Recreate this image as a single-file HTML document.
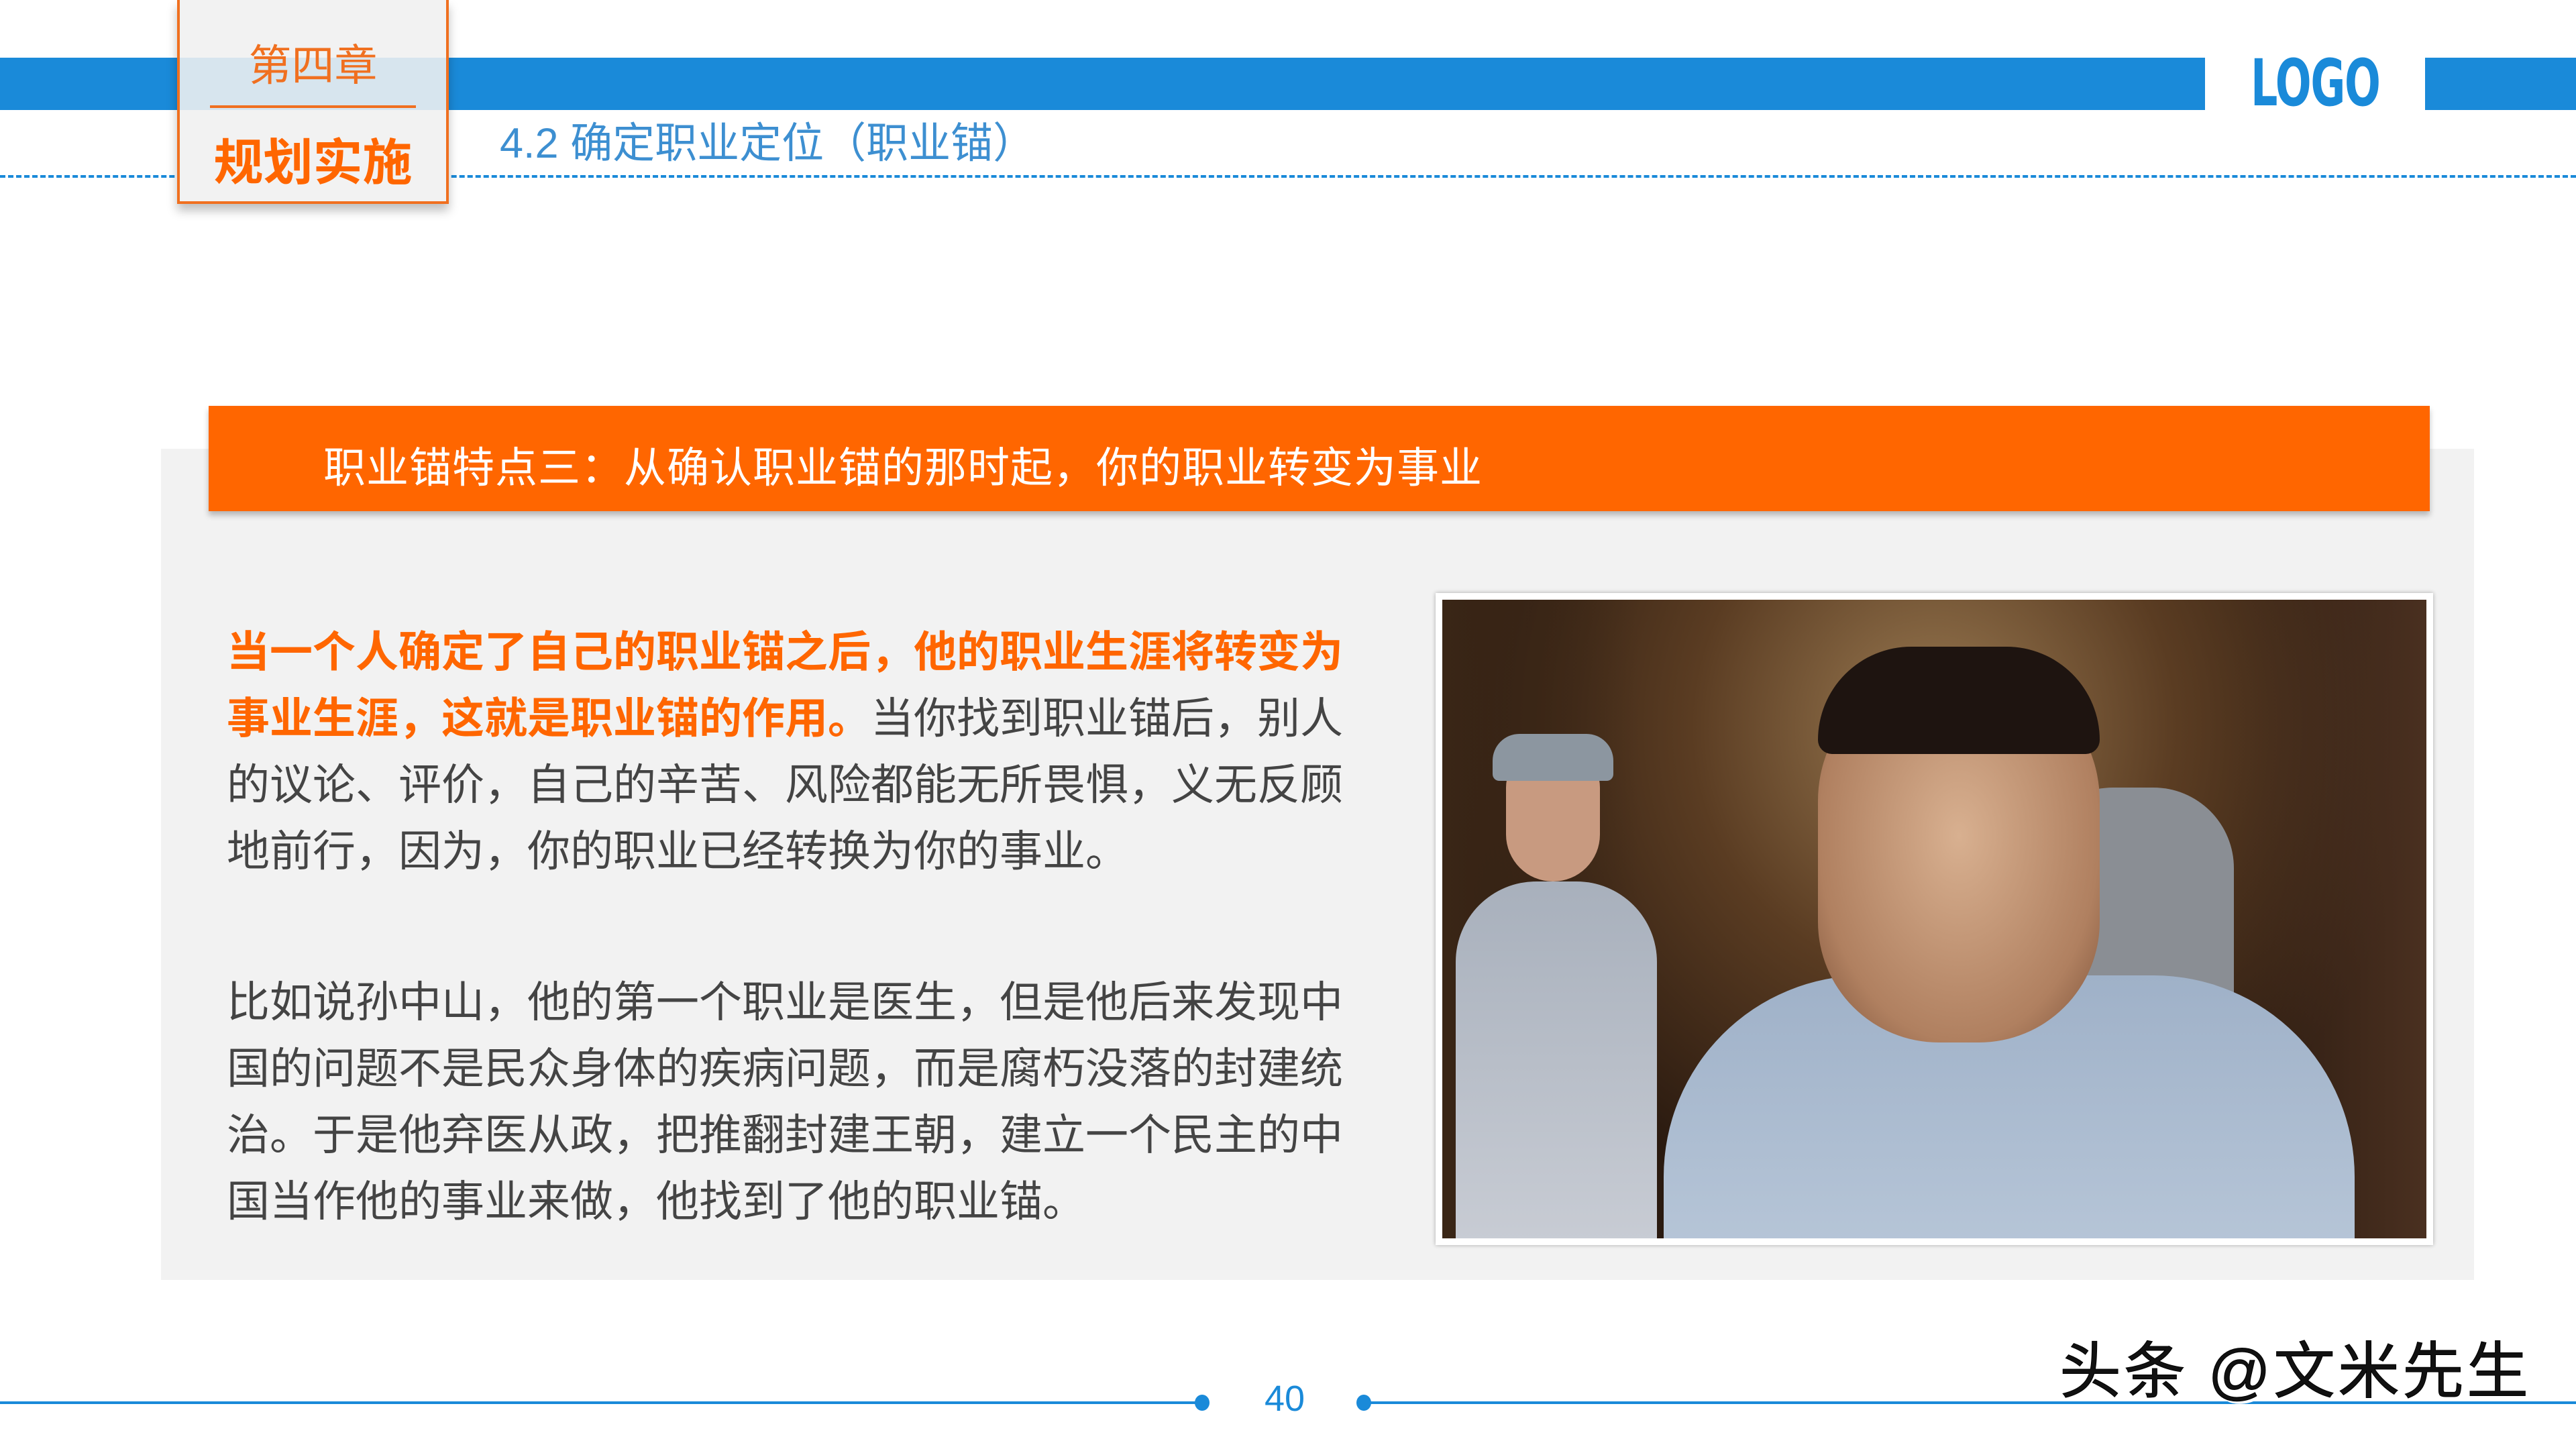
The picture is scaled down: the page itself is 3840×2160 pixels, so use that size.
<!DOCTYPE html>
<html><head><meta charset="utf-8"><style>
*{margin:0;padding:0;box-sizing:border-box}
body{width:3840px;height:2160px;position:relative;background:#fff;overflow:hidden;font-family:"Liberation Sans","Noto Sans CJK SC",sans-serif}
.a{position:absolute}
.t{font-size:64px;line-height:99px;color:#444;letter-spacing:0}
.o{color:#ff6600;font-weight:bold}
</style></head><body>
<div class="a" style="left:0;top:86px;width:3287px;height:78px;background:#1a8ad9"></div>
<div class="a" style="left:3615px;top:86px;width:225px;height:78px;background:#1a8ad9"></div>
<div class="a" style="left:3355px;top:74px;width:200px;height:100px;color:#1a8ad9;font-weight:bold;font-size:96px;line-height:100px;transform:scaleX(0.66);transform-origin:left;font-family:'DejaVu Sans','Liberation Sans',sans-serif;letter-spacing:-2px">LOGO</div>
<div class="a" style="left:0;top:261px;width:3840px;border-top:4px dashed #1a8ad9"></div>
<div class="a" style="left:264px;top:0;width:405px;height:304px;background:#f2f2f2;border:4px solid #f07020;border-top:none;box-shadow:0 10px 14px rgba(0,0,0,.25)"></div>
<div class="a" style="left:268px;top:86px;width:397px;height:78px;background:rgba(26,138,217,.12)"></div>
<div class="a" style="left:264px;top:60px;width:405px;text-align:center;color:#f07020;font-size:64px;line-height:76px">第四章</div>
<div class="a" style="left:313px;top:157px;width:307px;height:4px;background:#f07020"></div>
<div class="a" style="left:264px;top:198px;width:405px;text-align:center;color:#ff6600;font-weight:bold;font-size:74px;line-height:90px">规划实施</div>
<div class="a" style="left:745px;top:174px;color:#3d8fd1;font-size:63px;line-height:80px">4.2 确定职业定位（职业锚）</div>
<div class="a" style="left:240px;top:669px;width:3448px;height:1239px;background:#f2f2f2"></div>
<div class="a" style="left:311px;top:605px;width:3311px;height:157px;background:#ff6600;box-shadow:0 6px 8px rgba(0,0,0,.25)"></div>
<div class="a" style="left:482px;top:660px;color:#fff;font-size:63px;line-height:76px;letter-spacing:1px">职业锚特点三：从确认职业锚的那时起，你的职业转变为事业</div>
<div class="a t" style="left:338px;top:923px;width:1680px"><span class="o">当一个人确定了自己的职业锚之后，他的职业生涯将转变为事业生涯，这就是职业锚的作用。</span>当你找到职业锚后，别人的议论、评价，自己的辛苦、风险都能无所畏惧，义无反顾地前行，因为，你的职业已经转换为你的事业。</div>
<div class="a t" style="left:338px;top:1445px;width:1680px">比如说孙中山，他的第一个职业是医生，但是他后来发现中国的问题不是民众身体的疾病问题，而是腐朽没落的封建统治。于是他弃医从政，把推翻封建王朝，建立一个民主的中国当作他的事业来做，他找到了他的职业锚。</div>
<div class="a" style="left:2140px;top:884px;width:1487px;height:972px;background:#fff;box-shadow:0 0 6px rgba(0,0,0,.3)"></div>
<div class="a" style="left:2150px;top:894px;width:1467px;height:952px;overflow:hidden;background:radial-gradient(ellipse at 50% 20%,#9a7a52 0%,#5a3c22 35%,#2a1a10 70%)">
 <div class="a" style="left:0;top:0;width:1467px;height:952px;background:linear-gradient(90deg,#3a2616 0%,transparent 20%,transparent 80%,#4a3020 100%)"></div>
 <div class="a" style="left:20px;top:420px;width:300px;height:540px;background:linear-gradient(#a8b0bc,#c8ccd4);border-radius:120px 120px 0 0"></div>
 <div class="a" style="left:95px;top:220px;width:140px;height:200px;background:#c89a80;border-radius:60px 60px 70px 70px"></div>
 <div class="a" style="left:75px;top:200px;width:180px;height:70px;background:#8c96a0;border-radius:40px 40px 10px 10px"></div>
 <div class="a" style="left:880px;top:280px;width:300px;height:560px;background:#8a8e94;border-radius:120px 120px 0 0"></div>
 <div class="a" style="left:330px;top:560px;width:1030px;height:420px;background:linear-gradient(#9fb1c8,#b7c6d8);border-radius:300px 300px 0 0"></div>
 <div class="a" style="left:560px;top:100px;width:420px;height:560px;background:radial-gradient(ellipse at 50% 45%,#d8b090,#b08060 70%,#7a5038);border-radius:200px 200px 180px 180px"></div>
 <div class="a" style="left:560px;top:70px;width:420px;height:160px;background:#1e1410;border-radius:200px 200px 30px 30px"></div>
</div>
<div class="a" style="left:0;top:2089px;width:1793px;height:4px;background:#1a8ad9"></div>
<div class="a" style="left:2033px;top:2089px;width:1807px;height:4px;background:#1a8ad9"></div>
<div class="a" style="left:1781px;top:2079px;width:22px;height:24px;border-radius:50%;background:#1a8ad9"></div>
<div class="a" style="left:2022px;top:2079px;width:22px;height:24px;border-radius:50%;background:#1a8ad9"></div>
<div class="a" style="left:1860px;top:2053px;width:110px;text-align:center;color:#1a8ad9;font-size:54px;line-height:64px">40</div>
<div class="a" style="left:3070px;top:1990px;color:#111;font-size:92px;line-height:110px;-webkit-text-stroke:1px #000;text-shadow:4px 4px 0 #fff,-3px -3px 0 #fff;letter-spacing:4px">头条 @文米先生</div>
</body></html>
